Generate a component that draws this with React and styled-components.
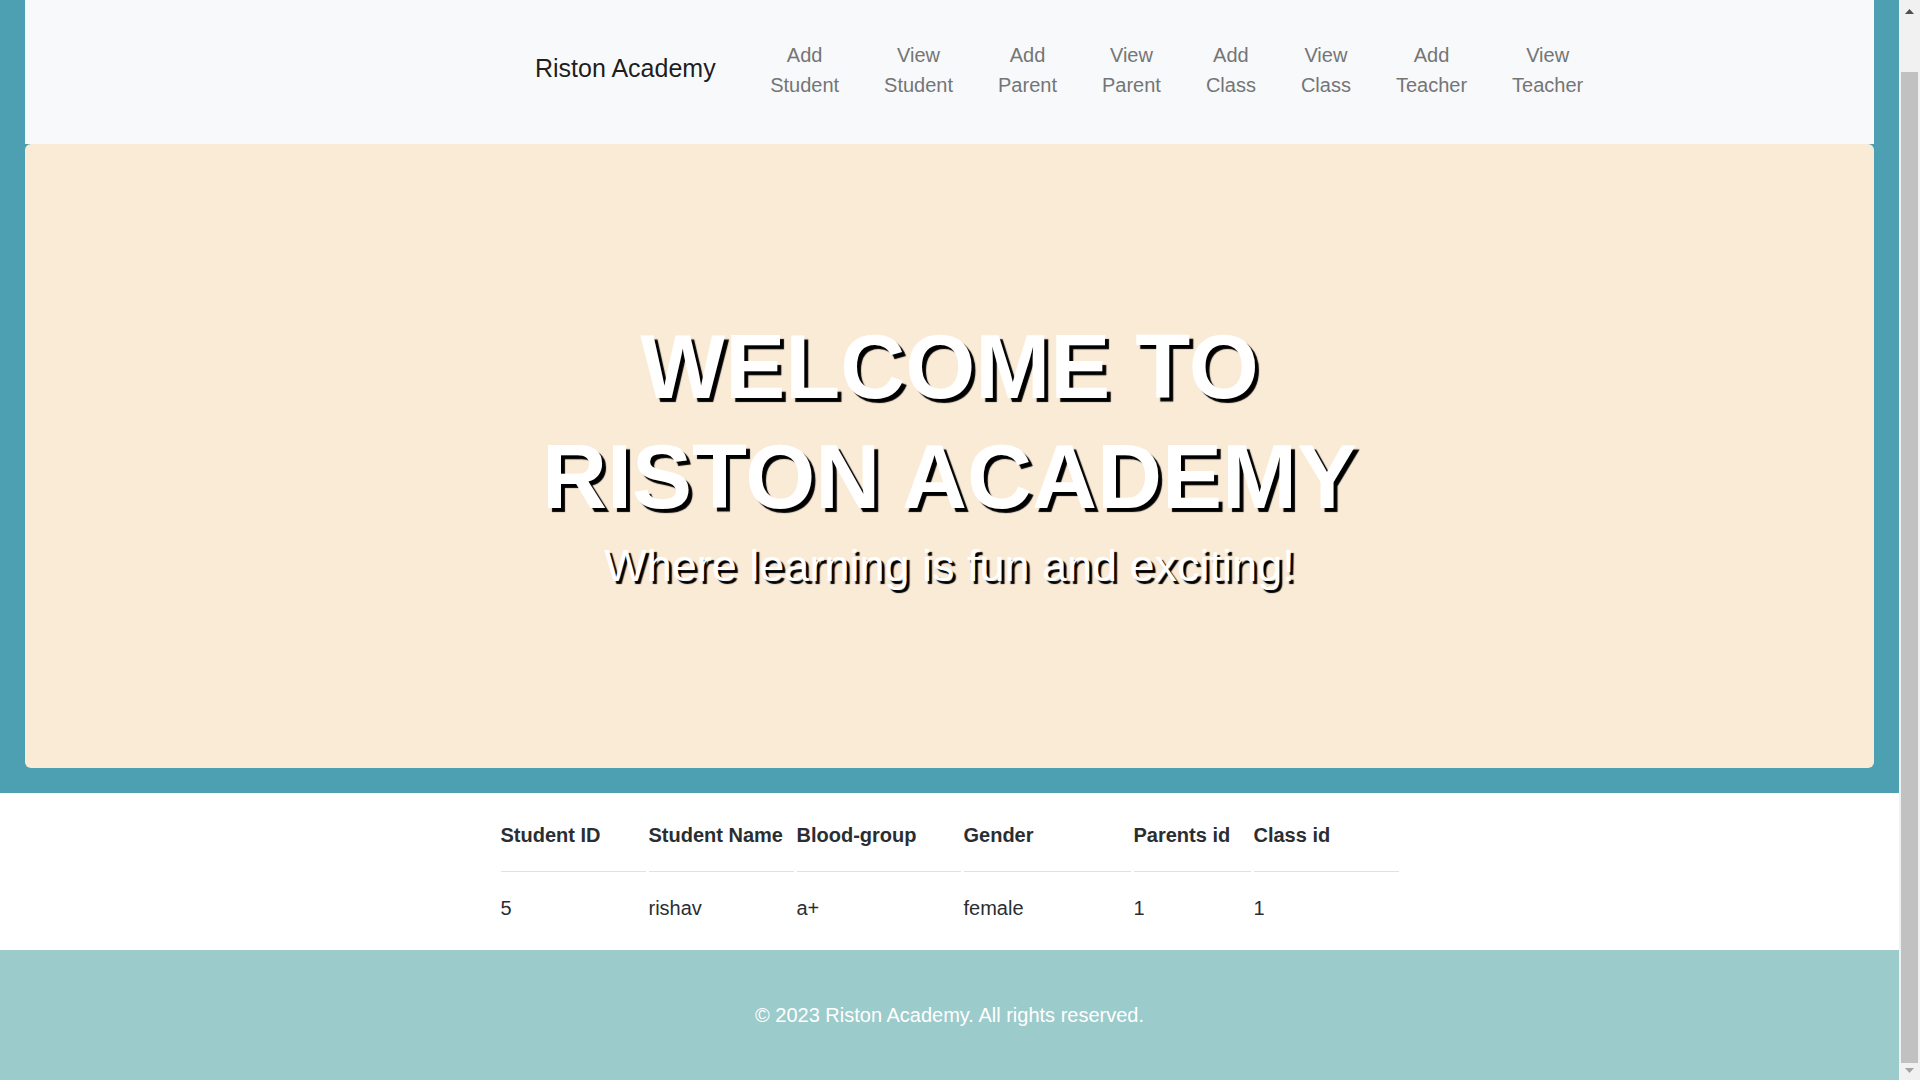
import React, { useLayoutEffect, useRef } from 'react';
import styled, { createGlobalStyle } from 'styled-components';

const GlobalStyle = createGlobalStyle`
    html, body {
        margin: 0;
        height: 100%;
        overflow: hidden;
    }
    body {
        font-family: "Liberation Sans", Arial, sans-serif;
        color: #212529;
        background: #ffffff;
    }
`;

const Viewport = styled.div`
    display: flex;
    height: 100vh;
`;

const Frame = styled.div`
    flex: 1;
    min-width: 0;
    overflow: hidden;
`;

/* window scrollbar, drawn since the page is scrolled to its bottom */
const Rail = styled.div`
    width: 21px;
    flex-shrink: 0;
    display: flex;
    flex-direction: column;
    background-color: #f1f1f1;
`;

const RailButton = styled.div`
    height: 17px;
    display: flex;
    justify-content: center;
    align-items: ${props => (props.down ? 'flex-start' : 'flex-end')};
    padding: ${props => (props.down ? '5px 0 0' : '0 0 3px')};
    box-sizing: border-box;
`;

const RailTrack = styled.div`
    flex: 1;
    display: flex;
    flex-direction: column;
    padding: 55px 2px 0;
`;

const Thumb = styled.div`
    flex: 1;
    background-color: #c1c1c1;
`;

const Shell = styled.div`
    background-color: #4da0b1;
    padding: 0 25px 25px;
`;

const NavBar = styled.nav`
    background-color: #f8f9fa;
    padding-top: 58px;
`;

const NavInner = styled.div`
    height: 144px;
    box-sizing: border-box;
    padding: 0 0 8px 510px;
    display: flex;
    align-items: center;
`;

const Brand = styled.a`
    font-size: 25px;
    line-height: 36px;
    color: rgba(0, 0, 0, 0.9);
    text-decoration: none;
    margin-right: 32px;
    white-space: nowrap;
`;

const NavList = styled.ul`
    display: flex;
    list-style: none;
    margin: 0;
    padding: 3px 0 0;
`;

const NavLink = styled.a`
    display: block;
    width: min-content;
    padding: 0 22.5px;
    font-size: 20px;
    line-height: 30px;
    text-align: center;
    color: #747576;
    text-decoration: none;
`;

const Hero = styled.section`
    height: 624px;
    box-sizing: border-box;
    padding-bottom: 6px;
    background-color: #faebd7;
    border-radius: 6px;
    display: flex;
    flex-direction: column;
    align-items: center;
    justify-content: center;
    text-align: center;
    color: #ffffff;
`;

const HeroTitle = styled.h1`
    margin: 0;
    font-size: 90px;
    line-height: 110px;
    font-weight: 700;
    text-shadow: 4px 4px 1px #000000;
`;

const HeroSub = styled.p`
    margin: 6px 0 0;
    font-size: 45px;
    line-height: 56px;
    text-shadow: 3px 3px 1px #000000;
`;

const TableSection = styled.section`
    background-color: #ffffff;
    padding: 6px 0;
`;

const Table = styled.table`
    margin: 0 auto;
    border-collapse: separate;
    border-spacing: 3px 0;
    font-size: 20px;
    line-height: 30px;
`;

const HeadCell = styled.th`
    width: ${props => props.w}px;
    padding: 21px 0;
    text-align: left;
    font-weight: 700;
    color: #2b2e31;
    border-bottom: 1px solid #dee2e6;
`;

const Cell = styled.td`
    padding: 21px 0;
    text-align: left;
    color: #2b2e31;
`;

const Footer = styled.footer`
    height: 130px;
    background-color: #9ccbcb;
    display: flex;
    align-items: center;
    justify-content: center;
    color: #ffffff;
    font-size: 20px;
`;

const links = [
    'Add Student', 'View Student', 'Add Parent', 'View Parent',
    'Add Class', 'View Class', 'Add Teacher', 'View Teacher',
];

const columns = [
    { label: 'Student ID', w: 145 },
    { label: 'Student Name', w: 145 },
    { label: 'Blood-group', w: 164 },
    { label: 'Gender', w: 167 },
    { label: 'Parents id', w: 117 },
    { label: 'Class id', w: 145 },
];

const students = [
    ['5', 'rishav', 'a+', 'female', '1', '1'],
];

export default function App() {
    const frame = useRef(null);

    useLayoutEffect(() => {
        const el = frame.current;
        if (el) el.scrollTop = el.scrollHeight;
    }, []);

    return (
        <>
            <GlobalStyle />
            <Viewport>
                <Frame ref={frame}>
                    <Shell>
                        <NavBar>
                            <NavInner>
                                <Brand href="#">Riston Academy</Brand>
                                <NavList>
                                    {links.map(l => (
                                        <li key={l}>
                                            <NavLink href="#">{l}</NavLink>
                                        </li>
                                    ))}
                                </NavList>
                            </NavInner>
                        </NavBar>
                        <Hero>
                            <HeroTitle>WELCOME TO<br />RISTON ACADEMY</HeroTitle>
                            <HeroSub>Where learning is fun and exciting!</HeroSub>
                        </Hero>
                    </Shell>
                    <TableSection>
                        <Table>
                            <thead>
                                <tr>
                                    {columns.map(c => (
                                        <HeadCell key={c.label} w={c.w}>{c.label}</HeadCell>
                                    ))}
                                </tr>
                            </thead>
                            <tbody>
                                {students.map((row, i) => (
                                    <tr key={i}>
                                        {row.map((v, j) => <Cell key={j}>{v}</Cell>)}
                                    </tr>
                                ))}
                            </tbody>
                        </Table>
                    </TableSection>
                    <Footer>© 2023 Riston Academy. All rights reserved.</Footer>
                </Frame>
                <Rail>
                    <RailButton>
                        <svg width="9" height="5" viewBox="0 0 9 5">
                            <polygon points="0,5 4.5,0 9,5" fill="#505050" />
                        </svg>
                    </RailButton>
                    <RailTrack>
                        <Thumb />
                    </RailTrack>
                    <RailButton down>
                        <svg width="9" height="5" viewBox="0 0 9 5">
                            <polygon points="0,0 4.5,5 9,0" fill="#a3a3a3" />
                        </svg>
                    </RailButton>
                </Rail>
            </Viewport>
        </>
    );
}
